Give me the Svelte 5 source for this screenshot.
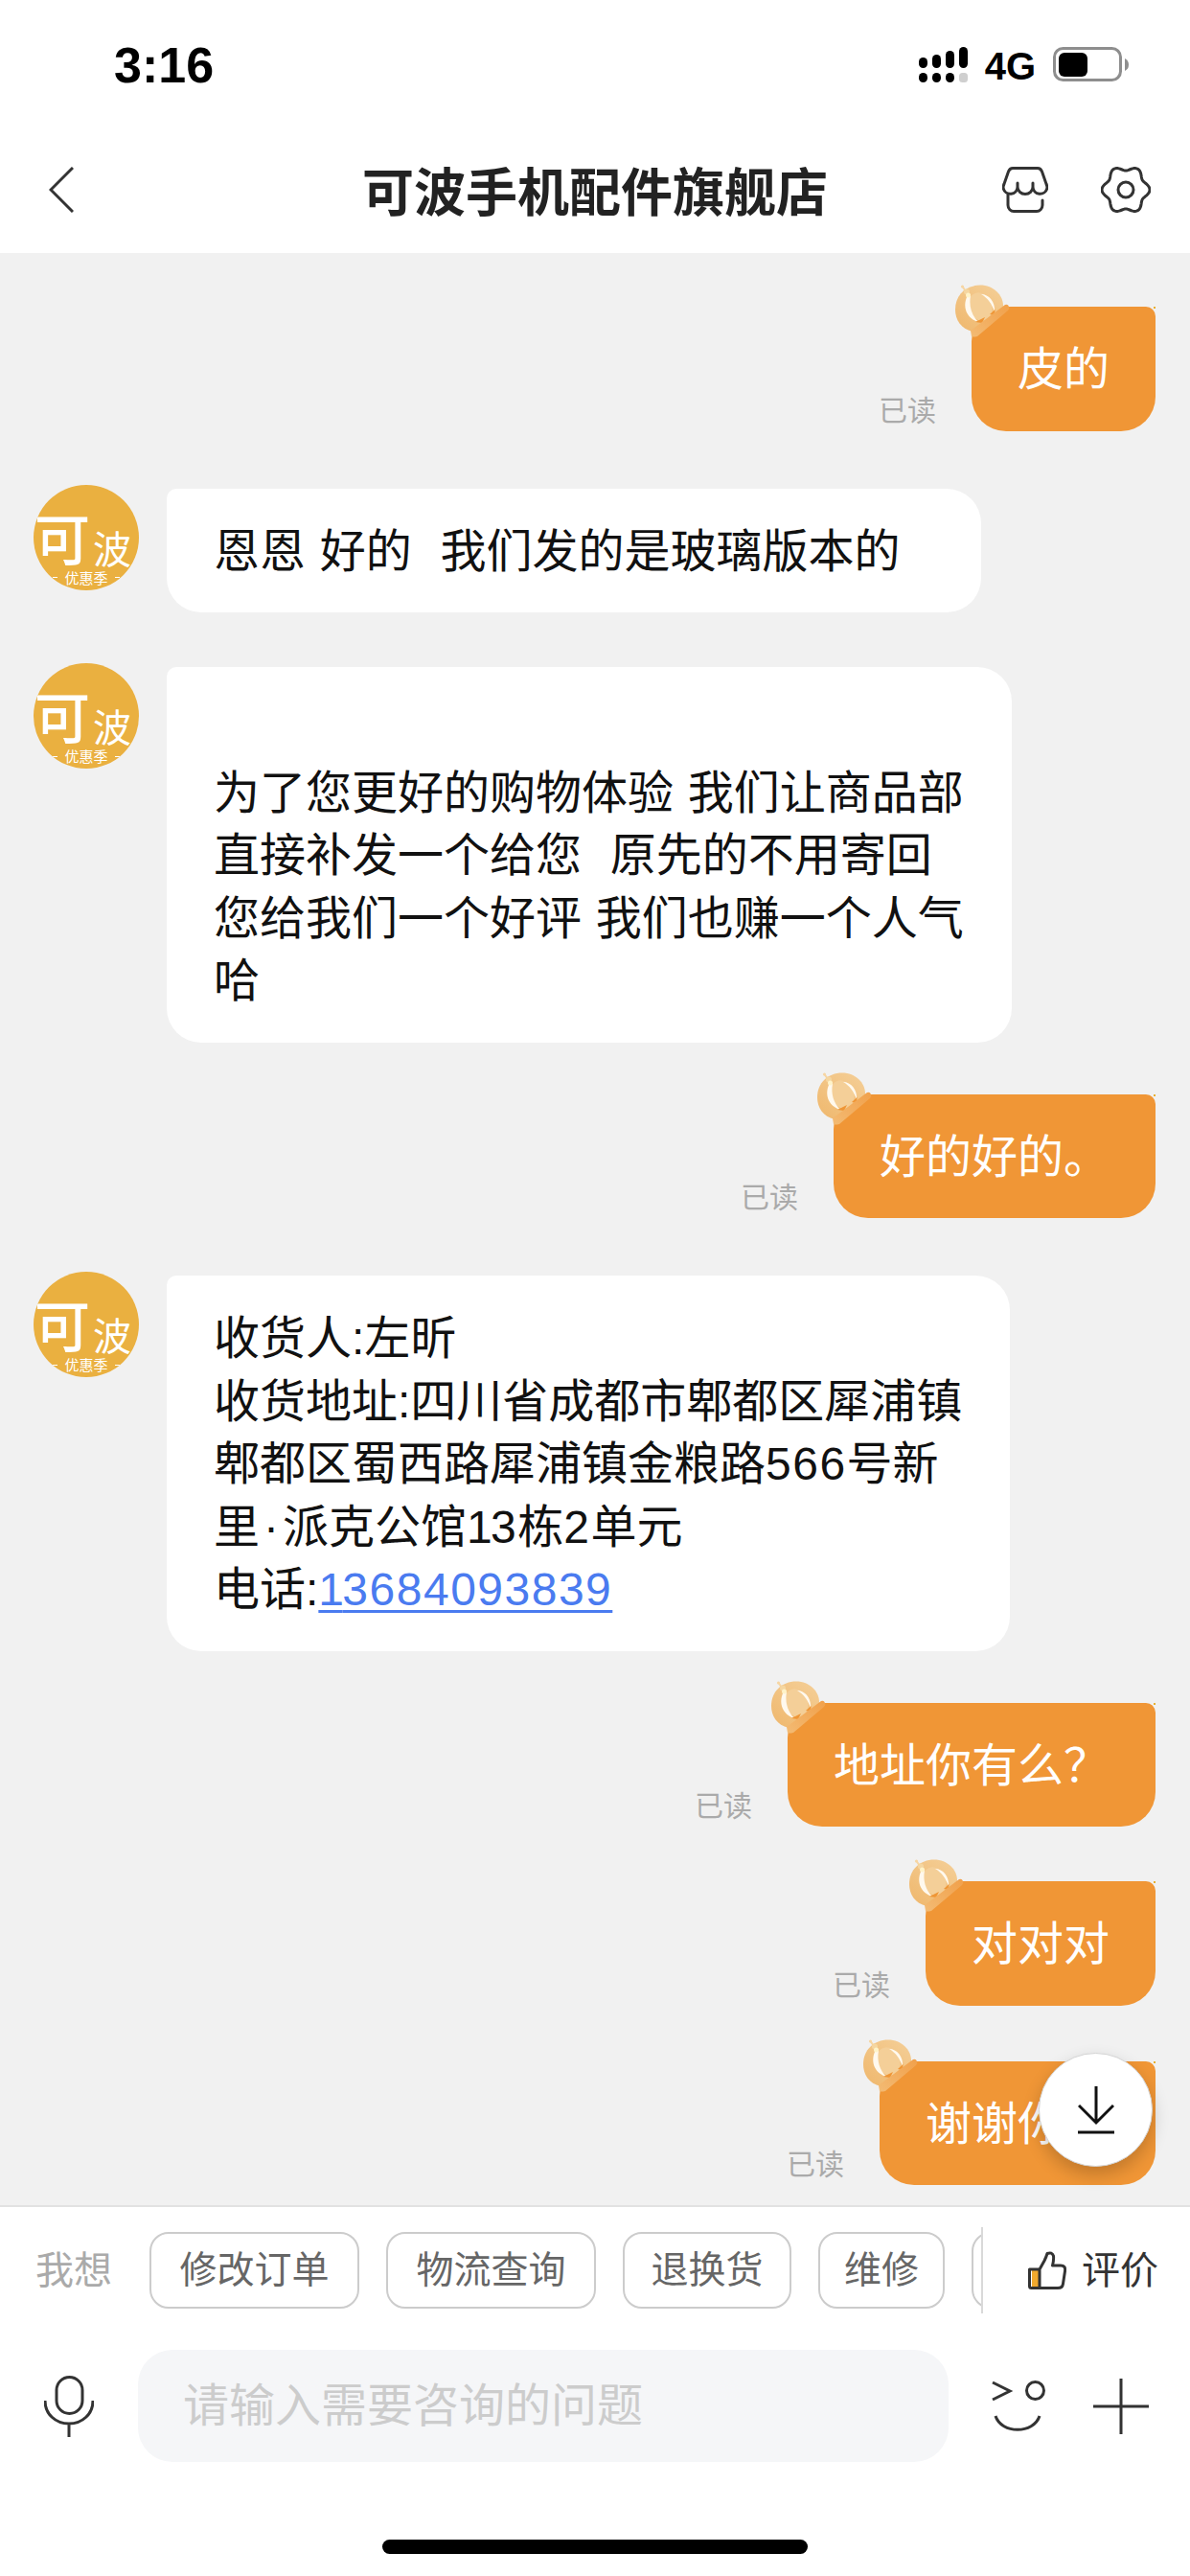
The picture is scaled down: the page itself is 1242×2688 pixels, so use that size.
<script>
  const messages = [
    { me: true, text: '皮的', gap: 'first' },
    { me: false, text: '恩恩 好的  我们发的是玻璃版本的', gap: 'g60', wide: true },
    { me: false, text: '\n为了您更好的购物体验 我们让商品部\n直接补发一个给您  原先的不用寄回\n您给我们一个好评 我们也赚一个人气\n哈', gap: 'g57' },
    { me: true, text: '好的好的。', gap: 'g54' },
    { me: false, text: '收货人:左昕\n收货地址:四川省成都市郫都区犀浦镇\n郫都区蜀西路犀浦镇金粮路566号新\n里·派克公馆13栋2单元\n电话:', phone: '13684093839', gap: 'g60' },
    { me: true, text: '地址你有么？', gap: 'g54' },
    { me: true, text: '对对对', gap: 'g57' },
    { me: true, text: '谢谢你们', gap: 'g58' }
  ];
  const chips = [
    { label: '修改订单', size: 'w4' },
    { label: '物流查询', size: 'w4' },
    { label: '退换货', size: 'w3' },
    { label: '维修', size: 'w2' },
    { label: '', size: 'w2' }
  ];

  // The reference's digits have a narrow "1" and slightly wider other figures,
  // and its middle dot is wider than the font's own.
  const parts = (text) =>
    text.split(/(1|\d+|·)/).filter(Boolean).map((t) => ({
      t,
      cls: t === '·' ? 'dot' : t === '1' ? 'one' : /^\d/.test(t) ? 'num' : ''
    }));

  const gearPath = (() => {
    const pts = [];
    for (let i = 0; i < 120; i++) {
      const t = (i / 120) * Math.PI * 2;
      const r = 22.5 + 2.5 * Math.cos(6 * t);
      pts.push(`${(26 + r * Math.cos(t)).toFixed(2)} ${(24 + r * Math.sin(t)).toFixed(2)}`);
    }
    return 'M' + pts.join('L') + 'Z';
  })();
</script>

{#snippet crown(id)}
  <svg class="crown" viewBox="0 0 57 55" width="57" height="55" aria-hidden="true">
    <defs>
      <linearGradient id="dome{id}" x1="0" y1="1" x2="0.8" y2="0">
        <stop offset="0" stop-color="#efb76c" />
        <stop offset="1" stop-color="#f4cd94" />
      </linearGradient>
      <linearGradient id="brim{id}" x1="0" y1="1" x2="1" y2="0">
        <stop offset="0" stop-color="#f3bb74" />
        <stop offset="1" stop-color="#f1a04a" />
      </linearGradient>
    </defs>
    <circle cx="7.500" cy="2" r="1.600" fill="#f6d6a4" />
    <path d="M7.500 2L13 10" stroke="#f6d6a4" stroke-width="2" />
    <path d="M18 49C6 46 0 37 0 26C0 11 11 .5 26 .5C40 .5 50 11 50 22L50 24Z" fill="url(#dome{id})" />
    <ellipse cx="26" cy="23" rx="12" ry="15" fill="#f4cf98" transform="rotate(-20 26 23)" />
    <path d="M13 11C7 22 11 35 24 39C17 32 14 22 16 12Z" fill="#fff9ee" />
    <path d="M27 10C35 10 42 18 41 28C38 20 34 14 27 10Z" fill="#fff9ee" />
    <path d="M21 39L31 34L28 40Z" fill="#ef9636" />
    <path d="M36 31L41.500 26L41 32Z" fill="#ef9636" />
    <circle cx="12" cy="7.500" r="3" fill="#f5d6a0" />
    <circle cx="13.500" cy="11" r="2.500" fill="#fff3c8" />
    <path d="M16 48L52 21Q55 20 56 23Q57 25 55 27L23 54Q18 55 17 54Z" fill="url(#brim{id})" />
  </svg>
{/snippet}

{#snippet avatar()}
  <div class="avatar" aria-hidden="true">
    <span class="av-big">可</span>
    <span class="av-small">波</span>
    <span class="av-tag">优惠季</span>
  </div>
{/snippet}

<div class="phone">
  <header class="status">
    <span class="time">3:16</span>
    <div class="status-right">
      <svg class="signal" width="51" height="37" viewBox="0 0 51 37" aria-hidden="true">
        <rect x="0" y="11" width="9" height="11" rx="4.500" />
        <rect x="14" y="8" width="9" height="14" rx="4.500" />
        <rect x="28" y="4" width="9" height="18" rx="4.500" />
        <rect x="42" y="0" width="9" height="22" rx="4.500" />
        <rect x="0" y="27" width="9" height="10" rx="4.500" />
        <rect x="14" y="27" width="9" height="10" rx="4.500" />
        <rect x="28" y="27" width="9" height="10" rx="4.500" />
        <rect x="42" y="27" width="9" height="10" rx="3.500" fill="#cfcfcf" />
      </svg>
      <span class="net">4G</span>
      <svg class="battery" width="80" height="36" viewBox="0 0 80 36" aria-hidden="true">
        <rect x="1.500" y="1.500" width="69" height="33" rx="9" fill="none" stroke="#8e8e8e" stroke-width="3" />
        <rect x="6" y="6" width="30" height="25" rx="6" fill="#000" />
        <path d="M75 12Q79 14 79 18.500Q79 23 75 25Z" fill="#8e8e8e" />
      </svg>
    </div>
  </header>

  <nav class="nav">
    <svg class="back" width="26" height="48" viewBox="0 0 26 48" aria-hidden="true">
      <path d="M25 1L2 24L25 47" fill="none" stroke="#333" stroke-width="3" />
    </svg>
    <h1>可波手机配件旗舰店</h1>
    <div class="nav-icons">
      <svg width="48" height="48" viewBox="0 0 48 48" fill="none" stroke="#333" stroke-width="3" aria-hidden="true">
        <path d="M16 17v4a7.500 7.500 0 0 1-14.800 1.500C.8 21 1 20 2 18L6.500 5C7.500 2.500 9 1.500 11 1.500H37C39 1.500 40.500 2.500 41.500 5L46 18C47 20 47.200 21 46.800 22.500A7.500 7.500 0 0 1 32 21V17M32 21a8 7.500 0 0 1-16 0" stroke-linecap="round" />
        <path d="M6 29V40C6 44 9 46.500 12 46.500H36C39 46.500 42 44 42 40V35" stroke-linecap="round" />
      </svg>
      <svg width="52" height="48" viewBox="0 0 52 48" fill="none" stroke="#333" stroke-width="3" aria-hidden="true">
        <path d={gearPath} />
        <circle cx="26" cy="24" r="8" />
      </svg>
    </div>
  </nav>

  <main class="chat">
    {#each messages as m, i}
      <div class="row {m.gap}" class:me={m.me}>
        {#if m.me}
          <span class="read">已读</span>
          <div class="bubble out">{@render crown(i)}{m.text}</div>
        {:else}
          {@render avatar()}
          <div class="bubble in" class:wide={m.wide}>{#each parts(m.text) as p}{#if p.cls}<span class={p.cls}>{p.t}</span>{:else}{p.t}{/if}{/each}{#if m.phone}<a href="#top" class="phone-link">{#each parts(m.phone) as p}<span class={p.cls}>{p.t}</span>{/each}</a>{/if}</div>
        {/if}
      </div>
    {/each}
    <button class="fab" aria-label="到底部">
      <svg width="38" height="50" viewBox="0 0 38 50" fill="none" stroke="#111" stroke-width="3" aria-hidden="true">
        <path d="M19 0V38M1 20L19 38L37 20M0 48H38" />
      </svg>
    </button>
  </main>

  <footer class="bar">
    <div class="suggest">
      <span class="want">我想</span>
      <div class="chips">
        {#each chips as c}<span class="chip {c.size}">{c.label}</span>{/each}
      </div>
      <div class="rate">
        <svg width="40" height="40" viewBox="0 0 40 40" aria-hidden="true">
          <rect x="4" y="19" width="7" height="19" fill="#f0a92e" />
          <path d="M1.500 19H12L17 10Q19 6 20 2.500Q25 .5 26.500 5Q27 9 25.500 15H34Q39.500 15 38.500 21L36.500 34Q36 38.500 31 38.500H3.500Q1.500 38.500 1.500 36.500ZM12 19V38.500" fill="none" stroke="#333" stroke-width="3" stroke-linejoin="round" />
        </svg>
        <span>评价</span>
      </div>
    </div>
    <div class="input-row">
      <svg class="mic" width="52" height="64" viewBox="0 0 52 64" fill="none" stroke="#333" stroke-width="3" aria-hidden="true">
        <rect x="13" y="1.500" width="27" height="38" rx="13.500" />
        <path d="M1 26C1 40 12 50 26 50C40 50 51 40 51 26M26 50V64" />
      </svg>
      <div class="input">请输入需要咨询的问题</div>
      <svg class="emoji" width="56" height="54" viewBox="0 0 56 54" fill="none" stroke="#333" stroke-width="3" aria-hidden="true">
        <path d="M1 2L19 11L1 20" />
        <circle cx="45.500" cy="10.500" r="9" />
        <path d="M4 37C10 56 44 56 50 37" />
      </svg>
      <svg class="plus" width="58" height="58" viewBox="0 0 58 58" fill="none" stroke="#333" stroke-width="3" aria-hidden="true">
        <path d="M29 0V58M0 29H58" />
      </svg>
    </div>
    <div class="home"></div>
  </footer>
</div>

<style>
  :global(body) {
    margin: 0;
    background: #fff;
  }
  .phone {
    width: 1242px;
    height: 2688px;
    display: flex;
    flex-direction: column;
    overflow: hidden;
    background: #fff;
    font-family: "Liberation Sans", "Noto Sans CJK SC", sans-serif;
  }
  .status {
    height: 132px;
    flex: none;
    box-sizing: border-box;
    padding: 38px 63px 0 119px;
    display: flex;
    justify-content: space-between;
    align-items: flex-start;
  }
  .time {
    font: 700 52px/60px "Liberation Sans", sans-serif;
    color: #000;
  }
  .status-right {
    display: flex;
    align-items: flex-start;
    padding-top: 11px;
  }
  .net {
    font: 700 40px/36px "Liberation Sans", sans-serif;
    margin: 2px 18px 0 18px;
    color: #000;
  }
  .nav {
    height: 132px;
    flex: none;
    position: relative;
    display: flex;
    align-items: center;
    justify-content: center;
  }
  .back {
    position: absolute;
    left: 51px;
    top: 42px;
  }
  h1 {
    margin: 0;
    font: 700 54px/66px "Noto Sans CJK SC", sans-serif;
    color: #222;
  }
  .nav-icons {
    position: absolute;
    left: 1046px;
    top: 42px;
    display: flex;
    gap: 55px;
  }
  .chat {
    flex: 1;
    position: relative;
    background: #f1f1f1;
    border-bottom: 2px solid #e2e2e2;
    overflow: hidden;
    padding: 56px 36px 0 35px;
    font-size: 48px;
    line-height: 65.5px;
    word-spacing: 1.5px;
  }
  .row {
    display: flex;
    align-items: flex-start;
  }
  .row.me {
    justify-content: flex-end;
    align-items: flex-end;
  }
  .g54 { margin-top: 54px; }
  .g57 { margin-top: 57px; }
  .g58 { margin-top: 58px; }
  .g60 { margin-top: 60px; }
  .bubble {
    position: relative;
    box-sizing: border-box;
    white-space: pre-wrap;
  }
  .in {
    background: #fff;
    color: #111;
    border-radius: 10px 36px 36px 36px;
    margin-left: 29px;
    padding: 33px 50px 31px 49px;
  }
  .in.wide {
    padding-right: 84px;
  }
  .num {
    letter-spacing: 1.5px;
  }
  .one {
    letter-spacing: -1.7px;
  }
  .dot {
    padding: 0 4px;
  }
  .out {
    background: #f09636;
    color: #fff;
    border-radius: 36px 10px 36px 36px;
    padding: 33px 48px 31px;
  }
  .out::after {
    content: "";
    position: absolute;
    right: 0;
    top: 0;
    width: 2px;
    height: 2px;
    background: #e8b030;
  }
  .crown {
    position: absolute;
    left: -17px;
    top: -23px;
    display: block;
  }
  .read {
    font-size: 30px;
    line-height: 36px;
    color: #aaa;
    margin: 0 37px 3px 0;
  }
  .phone-link {
    color: #4a7bf0;
    text-decoration: underline;
    text-decoration-thickness: 3px;
    text-underline-offset: 5px;
  }
  .avatar {
    position: relative;
    width: 110px;
    height: 110px;
    margin-top: -4px;
    flex: none;
    border-radius: 50%;
    background: #eab040;
    color: #fff;
    overflow: hidden;
    font-family: "Noto Sans CJK SC", sans-serif;
  }
  .av-big {
    position: absolute;
    left: 1px;
    top: 21px;
    font-size: 58px;
    line-height: 66px;
    font-weight: 500;
  }
  .av-small {
    position: absolute;
    left: 62px;
    top: 42px;
    font-size: 40px;
    line-height: 46px;
  }
  .av-tag {
    position: absolute;
    left: 0;
    right: 0;
    bottom: 3px;
    display: flex;
    justify-content: center;
    align-items: center;
    gap: 7px;
    font-size: 15px;
    line-height: 20px;
  }
  .av-tag::before,
  .av-tag::after {
    content: "";
    width: 5px;
    height: 1px;
    background: #fff;
  }
  .fab {
    position: absolute;
    left: 1084px;
    top: 1878px;
    width: 119px;
    height: 119px;
    padding: 0;
    box-sizing: border-box;
    border-radius: 50%;
    border: 1px solid #d4d4d4;
    background: #fff;
    box-shadow: 0 8px 18px rgba(0, 0, 0, 0.2);
    display: flex;
    align-items: center;
    justify-content: center;
  }
  .bar {
    flex: none;
    height: 385px;
    position: relative;
    background: #fff;
  }
  .suggest {
    display: flex;
    align-items: center;
    height: 80px;
    margin-top: 26px;
    padding-left: 37px;
    font-size: 40px;
  }
  .want {
    width: 119px;
    flex: none;
    color: #aaa;
    line-height: 50px;
  }
  .chips {
    width: 868px;
    height: 90px;
    flex: none;
    display: flex;
    gap: 28px;
    align-items: center;
    overflow: hidden;
    border-right: 2px solid #d9d9d9;
  }
  .chip {
    flex: none;
    box-sizing: border-box;
    height: 80px;
    line-height: 76px;
    border: 2px solid #ccc;
    border-radius: 20px;
    color: #666;
    font-size: 39px;
    text-align: center;
  }
  .w4 { width: 219px; }
  .w3 { width: 176px; }
  .w2 { width: 132px; }
  .rate {
    display: flex;
    align-items: center;
    gap: 16px;
    margin-left: 47px;
    color: #333;
    flex: none;
    line-height: 50px;
  }
  .input-row {
    display: flex;
    align-items: center;
    margin-top: 43px;
    padding-left: 46px;
  }
  .input {
    width: 846px;
    height: 117px;
    flex: none;
    margin-left: 46px;
    box-sizing: border-box;
    padding-left: 47px;
    background: #f5f6f8;
    border-radius: 36px;
    color: #ccc;
    font-size: 48px;
    line-height: 117px;
  }
  .emoji {
    margin-left: 45px;
    flex: none;
  }
  .plus {
    margin-left: 50px;
    flex: none;
  }
  .home {
    position: absolute;
    left: 399px;
    top: 347px;
    width: 444px;
    height: 15px;
    border-radius: 8px;
    background: #000;
  }
</style>
